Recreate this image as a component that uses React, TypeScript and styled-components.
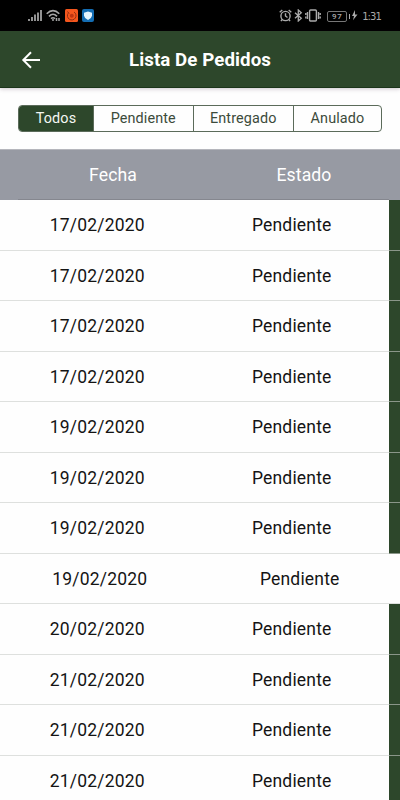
import React from 'react';
import styled, { createGlobalStyle } from 'styled-components';

const green = '#2d472b';

const Global = createGlobalStyle`
  * { box-sizing: border-box; }
  body { margin: 0; background: #fff; font-family: Roboto, sans-serif; }
`;

const Screen = styled.main`
  display: flex;
  flex-direction: column;
  width: 400px;
  height: 800px;
  overflow: hidden;
  background: #fefefe;
`;

const StatusBar = styled.div`
  display: flex;
  flex: none;
  justify-content: space-between;
  height: 31px;
  padding: 9px 19px 0 28px;
  background: #000;
`;

const StatusGroup = styled.div<{ $gap: number }>`
  display: flex;
  align-items: flex-start;
  gap: ${(p) => p.$gap}px;
  height: 14px;
  svg { display: block; flex: none; }
`;

const Battery = styled.span`
  width: 20px;
  height: 11px;
  margin: 2px 0 0 4px;
  border: 1px solid #777;
  border-radius: 2px;
  color: #aaa;
  font: 500 8px/9px Roboto, sans-serif;
  letter-spacing: 0.6px;
  text-align: center;
`;

const Clock = styled.span`
  margin: 2px 0 0 2px;
  color: #aaa;
  font: 400 10px/12px "DejaVu Sans", sans-serif;
  letter-spacing: -0.9px;
  white-space: nowrap;
`;

const Header = styled.header`
  display: grid;
  grid-template-columns: 40px 1fr 40px;
  flex: none;
  align-items: center;
  height: 57px;
  padding: 0 12px;
  background: ${green};
  border-bottom: 1px solid #1b351a;
  box-shadow: 0 1px 4px rgba(60, 30, 60, 0.25);
`;

const BackButton = styled.button`
  display: flex;
  padding: 1px 0 0 9px;
  border: 0;
  background: none;
`;

const Title = styled.h1`
  margin: 0;
  padding-top: 1px;
  color: #fff;
  font-size: 18.7px;
  font-weight: 700;
  letter-spacing: 0.08px;
  line-height: 24px;
  text-align: center;
  white-space: nowrap;
`;

const Tabs = styled.nav`
  display: grid;
  grid-template-columns: 75px 99.5px 100.5px 87px;
  flex: none;
  height: 27px;
  margin: 17px 0 17px 18px;
  width: 364px;
  border: 1px solid #5b6b5a;
  border-radius: 4px;
  overflow: hidden;
`;

const Tab = styled.button<{ $active?: boolean }>`
  padding: 0;
  border: 0;
  border-right: 1px solid #5b6b5a;
  background: ${(p) => (p.$active ? green : 'transparent')};
  color: ${(p) => (p.$active ? '#f4f7f3' : '#3c4b3b')};
  font: 400 14.4px/26px Roboto, sans-serif;
  letter-spacing: 0.12px;
  &:last-child { border-right: 0; }
`;

const TableHead = styled.div`
  display: grid;
  grid-template-columns: 226px 156px;
  flex: none;
  height: 51px;
  background: linear-gradient(#85878f, #85878f) 18px 100% / 371px 1px no-repeat #979aa3;
  border-top: 1px solid #b5b6bc;
  color: #fff;
  font-size: 17.6px;
  letter-spacing: 0.1px;
  line-height: 50px;
  text-align: center;
`;

const Row = styled.div<{ $plain?: boolean }>`
  display: grid;
  grid-template-columns: ${(p) => (p.$plain ? '199.5px 200.5px' : '194.5px 194.5px')};
  flex: none;
  height: 50.5px;
  border-bottom: 1px solid rgba(200, 204, 200, 0.6);
  background: ${(p) => (p.$plain ? '#fefefe' : `linear-gradient(90deg, #fefefe 389px, ${green} 389px)`)};
  color: #141414;
  font-size: 17.5px;
  letter-spacing: 0.18px;
  line-height: 51px;
  text-align: center;
`;

const dates = [
  '17/02/2020', '17/02/2020', '17/02/2020', '17/02/2020',
  '19/02/2020', '19/02/2020', '19/02/2020', '19/02/2020',
  '20/02/2020', '21/02/2020', '21/02/2020', '21/02/2020',
];

const Signal = () => (
  <svg width="14" height="13" viewBox="0 0 14 13" stroke="#999" strokeWidth="1.9">
    <path d="M1 12V10M4 12V8M7 12V5.5M10 12V3.5M13 12V1" />
  </svg>
);

const Wifi = () => (
  <svg width="15" height="13" viewBox="0 0 15 13" fill="none" stroke="#a5a5a5" strokeWidth="1.6">
    <path d="M.7 4.8Q7 -1.5 13.3 4.8M3 7.4Q7 3.2 11 7.4M5 9.7Q7 7.8 9 9.7" />
    <path d="M7 10v2M10.5 9v3M13 9v3" strokeWidth="1.5" />
  </svg>
);

const OrangeApp = () => (
  <svg width="13" height="13" viewBox="0 0 13 13" fill="none">
    <rect width="13" height="13" rx="1.5" fill="#f4561d" />
    <path d="M3.2 4.2A4.3 4.3 0 1 0 9 3M2.5 2.5l1.6 2" stroke="#8e2d12" strokeWidth="1" />
    <circle cx="6.8" cy="6.7" r="2" fill="#bd3512" />
  </svg>
);

const ShieldApp = () => (
  <svg width="12" height="13" viewBox="0 0 12 13">
    <rect width="12" height="13" rx="2" fill="#146db3" />
    <path d="M6 2.5l4 1.2v3Q9.5 9.5 6 11Q2.5 9.5 2 6.7v-3z" fill="#e4f5ff" />
  </svg>
);

const Alarm = () => (
  <svg width="13" height="13" viewBox="0 0 13 13" fill="none" stroke="#aaa" strokeWidth="1.4">
    <circle cx="6.5" cy="7" r="4.6" />
    <path d="M6.5 4.3V7l2 1.5M.7 3.2L3.3 1M12.3 3.2L9.7 1M3.3 10.5l-1.4 1.6M9.7 10.5l1.4 1.6" />
  </svg>
);

const Bluetooth = () => (
  <svg width="9" height="13" viewBox="0 0 9 13" fill="none" stroke="#aaa" strokeWidth="1.3">
    <path d="M1 3.7l6.3 5.6-3 2.7V1l3 2.7L1 9.3" />
  </svg>
);

const Vibrate = () => (
  <svg width="16" height="13" viewBox="0 0 16 13" fill="none" stroke="#aaa" strokeWidth="1.4">
    <rect x="4.6" y="1" width="6.8" height="11" rx="1" />
    <path d="M2.5 3v7M.8 4v2M.8 7.5v2M13.5 3v7M15.2 4v2M15.2 7.5v2" />
  </svg>
);

const Charge = () => (
  <svg width="9" height="12" viewBox="0 0 9 12" fill="#aaa">
    <path d="M6 1L3 7h2L4 11.2 8.5 5.5H6z" />
    <path d="M0 5h1v5H0z" />
  </svg>
);

const BackArrow = () => (
  <svg width="20" height="18" viewBox="0 0 20 18" fill="none" stroke="#fff" strokeWidth="2">
    <path d="M10 1.2L2.3 9l7.7 7.8M2.5 9H19" />
  </svg>
);

export default function App() {
  return (
    <>
      <Global />
      <Screen>
        <StatusBar>
          <StatusGroup $gap={4}>
            <Signal />
            <Wifi />
            <OrangeApp />
            <ShieldApp />
          </StatusGroup>
          <StatusGroup $gap={2}>
            <Alarm />
            <Bluetooth />
            <Vibrate />
            <Battery>97</Battery>
            <Charge />
            <Clock>1:31</Clock>
          </StatusGroup>
        </StatusBar>
        <Header>
          <BackButton aria-label="Volver"><BackArrow /></BackButton>
          <Title>Lista De Pedidos</Title>
        </Header>
        <Tabs>
          <Tab $active>Todos</Tab>
          <Tab>Pendiente</Tab>
          <Tab>Entregado</Tab>
          <Tab>Anulado</Tab>
        </Tabs>
        <TableHead>
          <span>Fecha</span>
          <span>Estado</span>
        </TableHead>
        {dates.map((date, i) => (
          <Row key={i} $plain={i === 7}>
            <span>{date}</span>
            <span>Pendiente</span>
          </Row>
        ))}
      </Screen>
    </>
  );
}
